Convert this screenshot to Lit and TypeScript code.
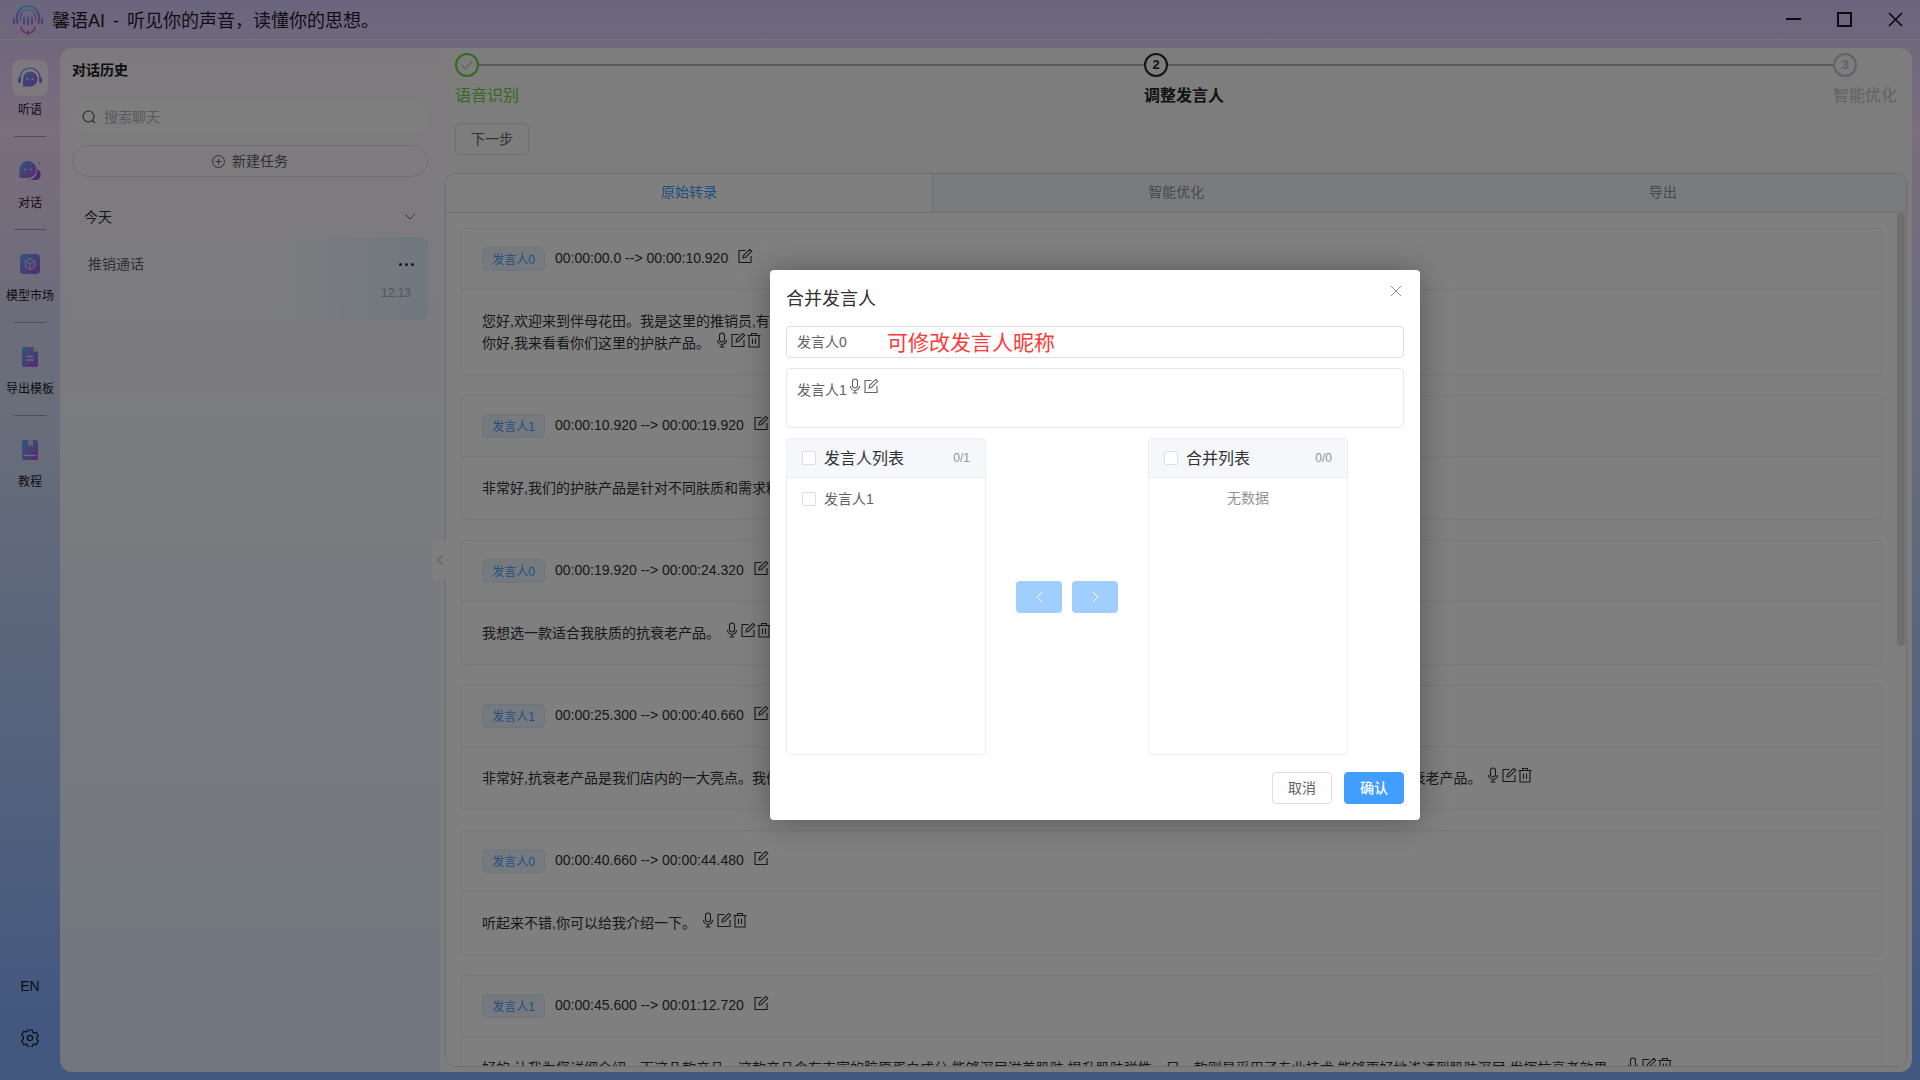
import { LitElement, html, svg, css } from 'lit';
import { customElement } from 'lit/decorators.js';

const micIcon = html`<svg class="ico" viewBox="0 0 16 16"><rect x="5.5" y="1" width="5" height="9" rx="2.5"/><path d="M3.5 8a4.5 4.5 0 0 0 9 0M8 12.5V15M5.5 15h5"/></svg>`;
const editIcon = html`<svg class="ico" viewBox="0 0 16 16"><path d="M8.5 2.5H2v12h12V8"/><path d="M6.5 7.5 12.8 1.4l1.9 1.9-6.2 6.2-2.4.5z"/></svg>`;
const trashIcon = html`<svg class="ico" viewBox="0 0 16 16"><path d="M1.5 3.5h13M5.5 3.5V1.5h5v2M3 3.5v11.5h10V3.5M6.5 6.5V12M9.5 6.5V12"/></svg>`;

const grad = (id: string) => svg`<defs><linearGradient id=${id} x1="0" y1="0" x2="1" y2="1"><stop offset="0" stop-color="#5fb0f5"/><stop offset="1" stop-color="#b052e0"/></linearGradient></defs>`;

const navItems = [
  {
    label: '听语',
    active: true,
    icon: html`<svg width="26" height="24" viewBox="0 0 26 24">${grad('g1')}
      <path d="M3 12a10 10 0 0 1 20 0" fill="none" stroke="url(#g1)" stroke-width="1.2"/>
      <rect x="1" y="11" width="3" height="6" rx="1.5" fill="url(#g1)"/><rect x="22" y="11" width="3" height="6" rx="1.5" fill="url(#g1)"/>
      <path d="M13 5.5a7.5 7.5 0 0 1 0 15H6v-7.5a7.5 7.5 0 0 1 7-7.5z" fill="url(#g1)"/>
      <circle cx="10.5" cy="13" r="1" fill="#e8e8f0"/><circle cx="15.5" cy="13" r="1" fill="#e8e8f0"/></svg>`,
  },
  {
    label: '对话',
    icon: html`<svg width="24" height="22" viewBox="0 0 24 22">${grad('g2')}
      <path d="M19 9a6 6 0 0 1 0 11H8a9.500 9.500 0 0 0 11-11z" fill="#9a50d0"/>
      <path d="M10 1a8.500 8.500 0 0 1 0 17H1.500v-8.500A8.500 8.500 0 0 1 10 1z" fill="url(#g2)"/>
      <circle cx="7" cy="9.500" r="1" fill="#e0e0ea"/><circle cx="12.500" cy="9.500" r="1" fill="#e0e0ea"/><circle cx="21" cy="3" r="1" fill="#8fa0e0"/></svg>`,
  },
  {
    label: '模型市场',
    icon: html`<svg width="20" height="20" viewBox="0 0 20 20">${grad('g3')}
      <rect width="20" height="20" rx="4" fill="url(#g3)"/>
      <path d="M10 4.500l4.700 2.700v5.600L10 15.500l-4.700-2.700V7.200zM5.300 7.200 10 10l4.700-2.800M10 10v5.500" fill="none" stroke="#d8d8ee" stroke-width="1"/></svg>`,
  },
  {
    label: '导出模板',
    icon: html`<svg width="16" height="20" viewBox="0 0 16 20">${grad('g4')}
      <path d="M2 0h9.500L16 4.500V18a2 2 0 0 1-2 2H2a2 2 0 0 1-2-2V2a2 2 0 0 1 2-2z" fill="url(#g4)"/>
      <path d="M11.500 0v4.500H16z" fill="#d8d8e8"/><path d="M4.500 9.500h7M4.500 13h7" stroke="#d8d8ee" stroke-width="1.300"/></svg>`,
  },
  {
    label: '教程',
    icon: html`<svg width="16" height="20" viewBox="0 0 16 20">${grad('g5')}
      <path d="M2 0h12a2 2 0 0 1 2 2v16a2 2 0 0 1-2 2H2a2 2 0 0 1-2-2V2a2 2 0 0 1 2-2z" fill="url(#g5)"/>
      <path d="M6 0h5v6.500L8.500 5 6 6.500z" fill="#c8c8dc"/><path d="M1.500 15.500h13" stroke="#d8d8ee" stroke-width="1.300"/></svg>`,
  },
];

const rows = [
  {
    who: '发言人0',
    time: '00:00:00.0 --> 00:00:10.920',
    lines: ['您好,欢迎来到伴母花田。我是这里的推销员,有什么可以帮您的吗?', '你好,我来看看你们这里的护肤产品。'],
  },
  {
    who: '发言人1',
    time: '00:00:10.920 --> 00:00:19.920',
    lines: ['非常好,我们的护肤产品是针对不同肤质和需求精心研发的。'],
  },
  { who: '发言人0', time: '00:00:19.920 --> 00:00:24.320', lines: ['我想选一款适合我肤质的抗衰老产品。'] },
  {
    who: '发言人1',
    time: '00:00:25.300 --> 00:00:40.660',
    lines: ['非常好,抗衰老产品是我们店内的一大亮点。我们有多款产品可供选择,它们都含有丰富的活性成分,能够有效地淡化细纹,紧致肌肤,也非常适合想要选购抗衰老产品。'],
  },
  { who: '发言人0', time: '00:00:40.660 --> 00:00:44.480', lines: ['听起来不错,你可以给我介绍一下。'] },
  {
    who: '发言人1',
    time: '00:00:45.600 --> 00:01:12.720',
    lines: ['好的,让我为您详细介绍一下这几款产品。这款产品含有丰富的胶原蛋白成分,能够深层滋养肌肤,提升肌肤弹性。另一款则是采用了专业技术,能够更好地渗透到肌肤深层,发挥抗衰老效果。'],
  },
];

@customElement('app-root')
export class AppRoot extends LitElement {
  static styles = css`
    :host {
      display: flex;
      flex-direction: column;
      position: relative;
      width: 1920px;
      height: 1080px;
      overflow: hidden;
      font-family: 'Liberation Sans', 'Noto Sans CJK SC', sans-serif;
      font-size: 14px;
      color: #303133;
      background: linear-gradient(180deg, #d6cafc 0%, #f6dcfa 12%, #dcd8f8 27%, #d2dcf4 38%, #a8c4fa 70%, #86b0ff 95%);
    }
    .ico {
      width: 16px;
      height: 16px;
      fill: none;
      stroke: #303133;
      stroke-width: 1.1;
    }
    /* CJK glyphs sit a little low in this font, nudge them up inside flex rows */
    .t {
      margin-bottom: 2px;
    }
    .titlebar {
      display: flex;
      align-items: center;
      flex: none;
      height: 39px;
      border-bottom: 1px solid #fff6;
      padding-left: 12px;
      color: #1c1c28;
      font-size: 18px;
    }
    .titlebar .logo {
      margin-right: 8px;
    }
    .apptitle {
      word-spacing: 3px;
    }
    .winbtns {
      display: flex;
      margin-left: auto;
      padding-right: 17px;
      gap: 36px;
    }
    .winbtns svg {
      display: block;
      width: 15px;
      height: 15px;
      fill: none;
      stroke: #14141c;
      stroke-width: 2;
    }
    .body {
      display: flex;
      flex: 1;
      min-height: 0;
    }
    .nav {
      display: flex;
      flex-direction: column;
      flex: none;
      width: 60px;
      padding-top: 20px;
      box-sizing: border-box;
    }
    .navitem {
      display: flex;
      flex-direction: column;
      align-items: center;
      height: 93px;
      font-size: 12px;
      line-height: 16px;
      color: #1c1c28;
      white-space: nowrap;
    }
    .tile {
      display: flex;
      align-items: center;
      justify-content: center;
      width: 36px;
      height: 36px;
      border-radius: 8px;
      margin-bottom: 6px;
    }
    .navitem.active .tile {
      background: #ffffffb0;
    }
    .navsep {
      width: 32px;
      height: 1px;
      margin-top: 18px;
      background: #6668;
    }
    .navfoot {
      display: flex;
      flex-direction: column;
      align-items: center;
      margin-top: auto;
      padding-bottom: 33px;
      gap: 33px;
      color: #14182a;
      line-height: 20px;
    }
    .navfoot svg {
      display: block;
      width: 18px;
      height: 18px;
      fill: none;
      stroke: #14182a;
      stroke-width: 1.2;
    }
    .panel {
      display: flex;
      flex: 1;
      min-width: 0;
      margin: 8px 8px 8px 0;
      border-radius: 12px;
      overflow: hidden;
    }
    .history {
      flex: none;
      width: 380px;
      box-sizing: border-box;
      padding: 12px;
      background: #ffffffc8;
    }
    .history h3 {
      margin: 0;
      font-size: 14px;
      line-height: 20px;
      font-weight: 700;
      color: #1c1c1c;
    }
    .search {
      display: flex;
      align-items: center;
      height: 32px;
      margin-top: 21px;
      padding-left: 10px;
      border-radius: 16px;
      background: #ffffffa0;
      color: #b0b2b6;
    }
    .search svg {
      width: 14px;
      height: 14px;
      margin-right: 8px;
      fill: none;
      stroke: #55575c;
      stroke-width: 1.2;
    }
    .newtask {
      display: flex;
      align-items: center;
      justify-content: center;
      gap: 7px;
      height: 32px;
      box-sizing: border-box;
      margin-top: 12px;
      border: 1px solid #dcdfe6;
      border-radius: 16px;
      color: #606266;
    }
    .newtask svg {
      width: 13px;
      height: 13px;
      fill: none;
      stroke: #606266;
    }
    .today {
      display: flex;
      align-items: center;
      justify-content: space-between;
      height: 40px;
      margin-top: 20px;
      padding: 0 13px 0 12px;
      color: #303133;
    }
    .today svg {
      width: 10px;
      height: 6px;
      fill: none;
      stroke: #606266;
    }
    .chat {
      height: 83px;
      box-sizing: border-box;
      padding: 16px 14px 0 16px;
      border-radius: 8px;
      background: linear-gradient(90deg, #ffffff30 0%, #ffffff40 55%, #e0f0ff 100%);
    }
    .chatrow {
      display: flex;
      align-items: center;
      justify-content: space-between;
      line-height: 22px;
      color: #606266;
    }
    .dots {
      display: flex;
      gap: 3px;
    }
    .dots i {
      width: 3px;
      height: 3px;
      border-radius: 50%;
      background: #303133;
    }
    .chattime {
      margin-top: 10px;
      padding-right: 3px;
      font-size: 12px;
      line-height: 16px;
      text-align: right;
      color: #a8abb2;
    }
    .main {
      display: flex;
      flex-direction: column;
      flex: 1;
      min-width: 0;
      position: relative;
      padding: 5px;
      background: #fafafa;
    }
    .handle {
      position: absolute;
      left: -8px;
      top: 492px;
      display: flex;
      align-items: center;
      justify-content: center;
      width: 16px;
      height: 40px;
      border-radius: 6px;
      background: #fff;
    }
    .handle svg {
      width: 6px;
      height: 10px;
      fill: none;
      stroke: #a0a2a8;
    }
    .steps {
      display: flex;
      flex: none;
      margin-left: 10px;
    }
    .step {
      flex: none;
      width: 689px;
      font-size: 16px;
      line-height: 24px;
    }
    .step.last {
      width: 65px;
      white-space: nowrap;
    }
    .steprow {
      display: flex;
      align-items: center;
      height: 24px;
    }
    .circle {
      display: flex;
      align-items: center;
      justify-content: center;
      flex: none;
      width: 24px;
      height: 24px;
      box-sizing: border-box;
      border: 2px solid currentColor;
      border-radius: 50%;
      font-size: 13px;
      font-weight: 700;
    }
    .circle svg {
      width: 12px;
      height: 10px;
      fill: none;
      stroke: currentColor;
    }
    .stepline {
      flex: 1;
      height: 2px;
      background: #b4b6ba;
    }
    .steplabel {
      margin-top: 7px;
    }
    .done {
      color: #74d040;
    }
    .cur {
      color: #222428;
    }
    .cur .steplabel {
      font-weight: 700;
    }
    .wait {
      color: #c0c4cc;
    }
    .nextbtn {
      flex: none;
      align-self: flex-start;
      margin: 15px 0 0 10px;
      padding: 0 0 2px;
      width: 74px;
      height: 32px;
      box-sizing: border-box;
      border: 1px solid #dcdfe6;
      border-radius: 4px;
      background: transparent;
      color: #606266;
      font: inherit;
    }
    .tabs {
      display: flex;
      flex-direction: column;
      flex: 1;
      min-height: 0;
      margin-top: 18px;
      border: 1px solid #d8dade;
      border-radius: 10px;
      overflow: hidden;
    }
    .tabhead {
      display: flex;
      flex: none;
      height: 38px;
      border-bottom: 1px solid #dcdfe6;
      background: #f5f7fa;
    }
    .tab {
      flex: 1;
      height: 38px;
      line-height: 36px;
      text-align: center;
      color: #909399;
    }
    .tab.on {
      flex: none;
      width: 486px;
      border-right: 1px solid #dcdfe6;
      background: #fff;
      color: #409eff;
      margin-bottom: -1px;
    }
    .tabbody {
      display: flex;
      flex-direction: column;
      flex: 1;
      min-height: 0;
      gap: 20px;
      padding: 15px;
      overflow: hidden;
      position: relative;
      background: #fff;
    }
    .thumb {
      position: absolute;
      right: 1px;
      top: 0;
      width: 8px;
      height: 433px;
      border-radius: 4px;
      background: #dcdde0;
    }
    .card {
      flex: none;
      width: 1421px;
      box-sizing: border-box;
      border: 1px solid #ebeef5;
      border-radius: 4px;
    }
    .cardhead {
      display: flex;
      align-items: center;
      padding: 18px 20px;
      border-bottom: 1px solid #ebeef5;
    }
    .tag {
      display: flex;
      align-items: center;
      justify-content: center;
      width: 63px;
      height: 24px;
      box-sizing: border-box;
      border: 1px solid #d9ecff;
      border-radius: 4px;
      background: #ecf5ff;
      color: #409eff;
      font-size: 12px;
    }
    .time {
      margin-left: 10px;
      margin-right: 9px;
      padding-bottom: 3px;
      color: #303133;
    }
    .cardhead .ico {
      margin-top: -6px;
    }
    .cardbody {
      padding: 20px;
      line-height: 22px;
      color: #303133;
      white-space: nowrap;
    }
    .line {
      display: flex;
      align-items: center;
      height: 22px;
    }
    .line .tools {
      display: flex;
      margin-left: 4px;
      margin-top: -6px;
    }
    .mask {
      position: absolute;
      inset: 0;
      background: #00000080;
    }
    .dialog {
      position: absolute;
      left: 770px;
      top: 270px;
      width: 650px;
      height: 550px;
      box-sizing: border-box;
      padding: 17px 16px 0;
      border-radius: 4px;
      background: #fff;
      box-shadow: 0 1px 30px #0000004d;
      color: #606266;
    }
    .dialog h2 {
      margin: 0;
      font-size: 18px;
      font-weight: 400;
      line-height: 24px;
      color: #303133;
    }
    .close {
      position: absolute;
      right: 19px;
      top: 16px;
      width: 10px;
      height: 10px;
      fill: none;
      stroke: #909399;
    }
    .input {
      position: relative;
      display: flex;
      align-items: center;
      height: 32px;
      box-sizing: border-box;
      margin-top: 15px;
      padding-left: 10px;
      border: 1px solid #dcdfe6;
      border-radius: 4px;
    }
    .hint {
      position: absolute;
      left: 100px;
      top: 1px;
      font-size: 21px;
      line-height: 30px;
      color: #ff3838;
    }
    .merged {
      display: flex;
      align-items: flex-start;
      height: 60px;
      box-sizing: border-box;
      margin-top: 10px;
      padding: 11px 10px 0;
      border: 1px solid #e4e7ed;
      border-radius: 4px;
      line-height: 20px;
    }
    .merged .ico {
      stroke: #606266;
      margin-top: -2px;
    }
    .transfer {
      display: flex;
      margin-top: 10px;
    }
    .tpanel {
      width: 200px;
      height: 317px;
      box-sizing: border-box;
      border: 1px solid #ebeef5;
      border-radius: 4px;
      overflow: hidden;
    }
    .thead {
      display: flex;
      align-items: center;
      height: 39px;
      box-sizing: border-box;
      padding: 0 15px;
      border-bottom: 1px solid #ebeef5;
      background: #f5f7fa;
      font-size: 16px;
      color: #303133;
    }
    .thead .count {
      margin-left: auto;
      font-size: 12px;
      color: #909399;
    }
    .check {
      flex: none;
      width: 14px;
      height: 14px;
      box-sizing: border-box;
      margin-right: 8px;
      border: 1px solid #dcdfe6;
      border-radius: 2px;
      background: #fff;
    }
    .titem {
      display: flex;
      align-items: center;
      height: 22px;
      margin-top: 10px;
      padding: 0 15px;
    }
    .empty {
      height: 22px;
      margin-top: 9px;
      line-height: 22px;
      text-align: center;
      color: #909399;
    }
    .tbtns {
      display: flex;
      align-items: center;
      gap: 10px;
      padding: 0 30px;
    }
    .tbtn {
      display: flex;
      align-items: center;
      justify-content: center;
      width: 46px;
      height: 32px;
      border-radius: 4px;
      background: #a0cfff;
    }
    .tbtn svg {
      width: 7px;
      height: 12px;
      fill: none;
      stroke: #fff;
    }
    .footer {
      display: flex;
      justify-content: flex-end;
      gap: 12px;
      margin-top: 17px;
    }
    .btn {
      display: flex;
      align-items: center;
      justify-content: center;
      width: 60px;
      height: 32px;
      box-sizing: border-box;
      border: 1px solid #dcdfe6;
      border-radius: 4px;
    }
    .btn.primary {
      border-color: #409eff;
      background: #409eff;
      color: #fff;
      font-weight: 500;
    }
  `;

  renderCard(row: (typeof rows)[number]) {
    return html`
      <div class="card">
        <div class="cardhead">
          <span class="tag"><span class="t">${row.who}</span></span>
          <span class="time">${row.time}</span>
          ${editIcon}
        </div>
        <div class="cardbody">
          ${row.lines.map(
            (text) => html`<div class="line">
              <span>${text}</span>
              <span class="tools">${micIcon}${editIcon}${trashIcon}</span>
            </div>`,
          )}
        </div>
      </div>
    `;
  }

  render() {
    return html`
      <div class="titlebar">
        <svg class="logo" width="32" height="32" viewBox="0 0 32 32">
          <defs>
            <linearGradient id="lg" x1="0" y1="0" x2="0" y2="1">
              <stop offset="0" stop-color="#60c8f0" />
              <stop offset="0.55" stop-color="#8a70e8" />
              <stop offset="1" stop-color="#e060d0" />
            </linearGradient>
          </defs>
          <g fill="none" stroke="url(#lg)" stroke-linecap="round">
            <path d="M5 18V13A11 11 0 0 1 27 13V18" stroke-width="1.6" />
            <path d="M8.500 16V13A7.500 7.500 0 0 1 23.500 13V16" stroke-width="1.200" />
            <path d="M2 14v6M30 14v6M12 13v7M16 12v9M20 13v7M5.500 15v4M26.500 15v4" stroke-width="1.700" />
            <path d="M9 23a7 6 0 0 0 14 0M16 27v4" stroke="#d868d0" stroke-width="1.700" />
          </g>
        </svg>
        <span class="apptitle t">馨语AI - 听见你的声音，读懂你的思想。</span>
        <div class="winbtns">
          <svg viewBox="0 0 15 15"><path d="M0 7h15" /></svg>
          <svg viewBox="0 0 15 15"><rect x="1" y="1" width="13" height="13" /></svg>
          <svg viewBox="0 0 15 15"><path d="M1 1l13 13M14 1 1 14" stroke-width="1.600" /></svg>
        </div>
      </div>
      <div class="body">
        <div class="nav">
          ${navItems.map(
            (item, i) => html`
              <div class="navitem ${item.active ? 'active' : ''}">
                <div class="tile">${item.icon}</div>
                ${item.label}
                ${i < navItems.length - 1 ? html`<div class="navsep"></div>` : ''}
              </div>
            `,
          )}
          <div class="navfoot">
            <span>EN</span>
            <svg viewBox="0 0 18 18">
              <path d="M6.800 1.500h4.400l.5 2.200 1.300.8 2.200-.7 2.200 3.800-1.700 1.500v1.800l1.700 1.500-2.200 3.800-2.200-.7-1.300.8-.5 2.200H6.800l-.5-2.200-1.300-.8-2.200.7L.6 12.400l1.700-1.500V8.100L.6 6.600l2.200-3.800 2.200.7 1.300-.8z" transform="translate(0 -.5)" />
              <circle cx="9" cy="9" r="2.600" />
            </svg>
          </div>
        </div>
        <div class="panel">
          <div class="history">
            <h3>对话历史</h3>
            <div class="search">
              <svg viewBox="0 0 14 14"><circle cx="6.500" cy="6.500" r="5.500" /><path d="M10.500 10.500 13 13" /></svg>
              <span class="t">搜索聊天</span>
            </div>
            <div class="newtask">
              <svg viewBox="0 0 13 13"><circle cx="6.500" cy="6.500" r="6" /><path d="M6.500 3.500v6M3.500 6.500h6" /></svg>
              <span class="t">新建任务</span>
            </div>
            <div class="today">
              <span class="t">今天</span>
              <svg viewBox="0 0 10 6"><path d="M.5.5 5 5 9.500.5" /></svg>
            </div>
            <div class="chat">
              <div class="chatrow">
                推销通话
                <span class="dots"><i></i><i></i><i></i></span>
              </div>
              <div class="chattime">12:13</div>
            </div>
          </div>
          <div class="main">
            <div class="handle"><svg viewBox="0 0 6 10"><path d="M5.500.5 .5 5l5 4.500" /></svg></div>
            <div class="steps">
              <div class="step done">
                <div class="steprow">
                  <div class="circle"><svg viewBox="0 0 12 10"><path d="M1 5l3.500 4L11 1" /></svg></div>
                  <div class="stepline"></div>
                </div>
                <div class="steplabel">语音识别</div>
              </div>
              <div class="step cur">
                <div class="steprow">
                  <div class="circle">2</div>
                  <div class="stepline"></div>
                </div>
                <div class="steplabel">调整发言人</div>
              </div>
              <div class="step last wait">
                <div class="steprow"><div class="circle">3</div></div>
                <div class="steplabel">智能优化</div>
              </div>
            </div>
            <button class="nextbtn">下一步</button>
            <div class="tabs">
              <div class="tabhead">
                <div class="tab on">原始转录</div>
                <div class="tab">智能优化</div>
                <div class="tab">导出</div>
              </div>
              <div class="tabbody">
                ${rows.map((row) => this.renderCard(row))}
                <div class="thumb"></div>
              </div>
            </div>
          </div>
        </div>
      </div>
      <div class="mask"></div>
      <div class="dialog">
        <h2>合并发言人</h2>
        <svg class="close" viewBox="0 0 10 10"><path d="M0 0l10 10M10 0 0 10" /></svg>
        <div class="input">
          <span class="t">发言人0</span>
          <span class="hint">可修改发言人昵称</span>
        </div>
        <div class="merged">发言人1${micIcon}${editIcon}</div>
        <div class="transfer">
          <div class="tpanel">
            <div class="thead"><span class="check"></span><span class="t">发言人列表</span><span class="count">0/1</span></div>
            <div class="titem"><span class="check"></span><span class="t">发言人1</span></div>
          </div>
          <div class="tbtns">
            <div class="tbtn"><svg viewBox="0 0 7 12"><path d="M6 1 1 6l5 5" /></svg></div>
            <div class="tbtn"><svg viewBox="0 0 7 12"><path d="M1 1l5 5-5 5" /></svg></div>
          </div>
          <div class="tpanel">
            <div class="thead"><span class="check"></span><span class="t">合并列表</span><span class="count">0/0</span></div>
            <div class="empty">无数据</div>
          </div>
        </div>
        <div class="footer">
          <div class="btn"><span class="t">取消</span></div>
          <div class="btn primary"><span class="t">确认</span></div>
        </div>
      </div>
    `;
  }
}
